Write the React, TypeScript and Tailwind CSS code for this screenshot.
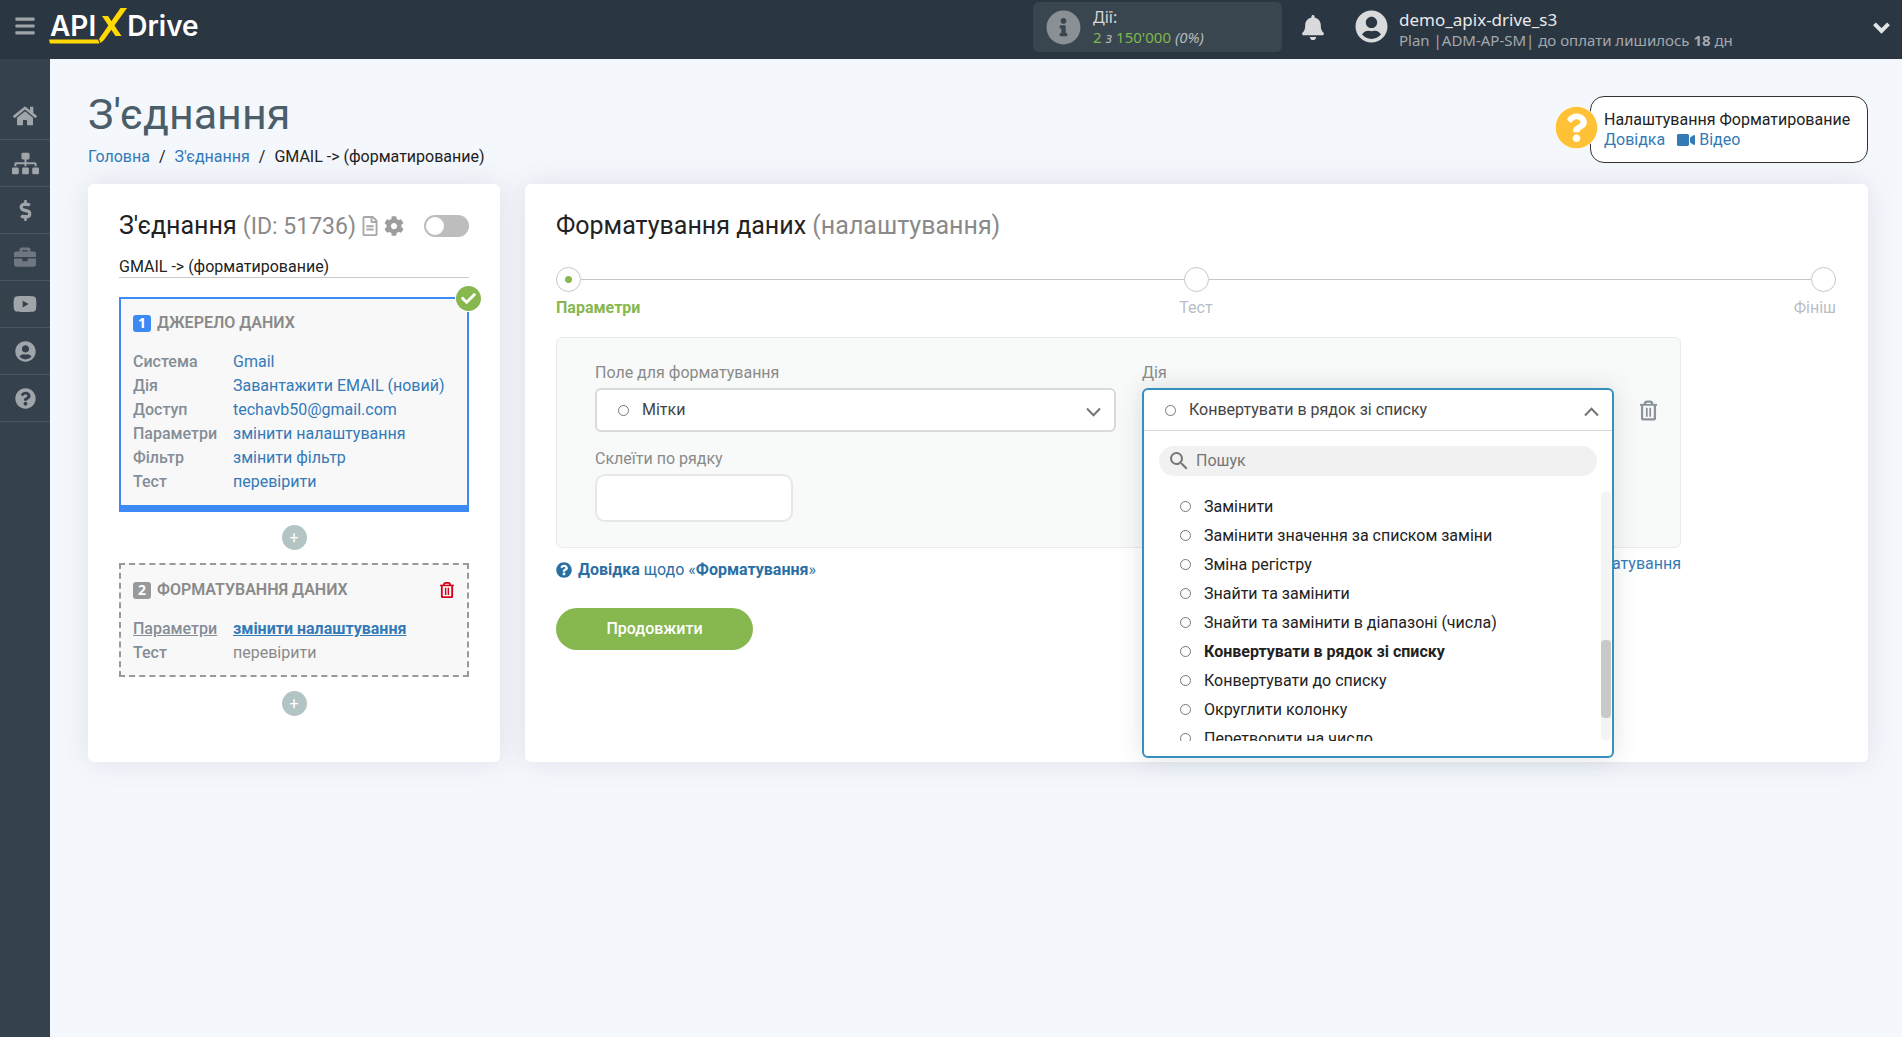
import type { ReactNode } from "react";
import {
  FaHome,
  FaSitemap,
  FaDollarSign,
  FaBriefcase,
  FaYoutube,
  FaUserCircle,
  FaQuestionCircle,
  FaInfoCircle,
  FaBell,
  FaVideo,
  FaCog,
  FaRegFileAlt,
  FaCheck,
  FaBars,
} from "react-icons/fa";
import { MdSearch } from "react-icons/md";

const roboto = "font-['Roboto',sans-serif]";
const notoSans = "font-['Noto_Sans',sans-serif]";

function Logo() {
  return (
    <a href="#" aria-label="APIXDrive" className="flex h-[38px] items-center font-['Inter',sans-serif] text-[28px] leading-[38px] font-semibold text-white">
      <span>API</span>
      <svg width="31" height="38" viewBox="0 0 31 38" className="overflow-visible" aria-hidden="true">
        <path d="M24.500 1H31L8 33L4.500 36L3 32Z" fill="#ffd900" />
        <path d="M6 9H12L25.500 29H19.500Z" fill="#ffd900" />
        <path d="M-47 32.500H2L3.500 36.500H-46Z" fill="#ffd900" />
      </svg>
      <span>Drive</span>
    </a>
  );
}

function ChevronIcon({ up = false }: { up?: boolean }) {
  return (
    <svg width="15" height="10" viewBox="0 0 15 10" fill="none" stroke="#757575" strokeWidth="2" aria-hidden="true">
      <path d={up ? "M1 8.500L7.500 1.800L14 8.500" : "M1 1.500L7.500 8.200L14 1.500"} />
    </svg>
  );
}

function TrashIcon({ className }: { className: string }) {
  return (
    <svg viewBox="0 0 18 21" fill="none" stroke="currentColor" strokeWidth="2.400" className={className} aria-hidden="true">
      <path d="M0 4.500H18" strokeWidth="2" />
      <path d="M5 4C5 2 6 1.200 7.500 1.200H10.500C12 1.200 13 2 13 4" />
      <path d="M2.200 5V19C2.200 19.500 2.500 19.800 3 19.800H15C15.500 19.800 15.800 19.500 15.800 19V5" />
      <path d="M7.200 7.500V17M10.800 7.500V17" strokeWidth="1.900" />
    </svg>
  );
}

const navItems = [
  { label: "Головна", icon: <FaHome className="size-6" /> },
  { label: "З'єднання", icon: <FaSitemap className="size-[27px]" /> },
  { label: "Оплата", icon: <FaDollarSign className="size-[21px]" /> },
  { label: "Проекти", icon: <FaBriefcase className="size-[22px] text-[#6f7780]" /> },
  { label: "Відео", icon: <FaYoutube className="size-6" /> },
  { label: "Профіль", icon: <FaUserCircle className="size-[21px]" /> },
  { label: "Довідка", icon: <FaQuestionCircle className="size-[21px]" /> },
];

function Header() {
  return (
    <header className={`flex h-[59px] shrink-0 items-start bg-[#2b3643] ${notoSans}`}>
      <button type="button" aria-label="Меню" className="mt-[15px] flex w-[50px] justify-center text-[#a0a5a9]">
        <FaBars className="size-[22px]" />
      </button>
      <div className="mt-[7px]">
        <Logo />
      </div>
      <div className="ml-auto flex w-[869px] items-start">
        <div className="mt-[2px] flex h-[50px] w-[249px] items-center gap-3 rounded-md bg-[#3a464f] pl-[13px]">
          <FaInfoCircle className="size-[35px] text-[#8a9093]" />
          <div className="text-base leading-5 text-[#d6d8da]">
            <div>Дії:</div>
            <div className="text-[15px] leading-5 text-[#b4b9bc]">
              <span className="text-[#7fb84c]">2</span> <em>з</em> <span className="text-[#7fb84c]">150'000</span> <em>(0%)</em>
            </div>
          </div>
        </div>
        <button type="button" aria-label="Сповіщення" className="mt-[15px] ml-5 text-[#d8dadb]">
          <FaBell className="h-[25px] w-[22px]" />
        </button>
        <FaUserCircle className="mt-[10px] ml-[31px] size-[33px] text-[#d8dadb]" />
        <div className="mt-[10px] ml-[11px] text-[#e8e9ea]">
          <div className="text-[17px] leading-5">demo_apix-drive_s3</div>
          <div className="text-[15px] leading-5 text-[#a3a8ac]">
            Plan |ADM-AP-SM| до оплати лишилось <b>18</b> дн
          </div>
        </div>
        <button type="button" aria-label="Розгорнути" className="mt-[22px] mr-3 ml-auto">
          <svg width="17" height="12" viewBox="0 0 17 12" fill="none" stroke="#e3e4e5" strokeWidth="4" aria-hidden="true">
            <path d="M1.500 1.800L8.500 8.800L15.500 1.800" />
          </svg>
        </button>
      </div>
    </header>
  );
}

function Sidebar() {
  return (
    <nav className="w-[50px] shrink-0 bg-[#36414e] pt-[34px]">
      {navItems.map((n) => (
        <a key={n.label} href="#" aria-label={n.label} className="flex h-[47px] items-center justify-center border-b border-[#4b5561] text-[#a0a5a9]">
          {n.icon}
        </a>
      ))}
    </nav>
  );
}

function StepHead({ n, title, color }: { n: number; title: string; color: string }) {
  return (
    <h3 className="flex items-center gap-[6px] text-base leading-[22px] font-semibold text-[#8a8a8a]">
      <span className={`flex h-[17px] w-[18px] items-center justify-center rounded-[3px] text-sm leading-4 font-bold text-white ${notoSans} ${color}`}>{n}</span>
      {title}
    </h3>
  );
}

function PlusButton() {
  return (
    <button type="button" aria-label="Додати блок" className="mx-auto flex size-[25px] items-center justify-center rounded-full bg-[#b3c4c4] text-base leading-4 text-white">
      +
    </button>
  );
}

const sourceRows = [
  ["Система", "Gmail"],
  ["Дія", "Завантажити EMAIL (новий)"],
  ["Доступ", "techavb50@gmail.com"],
  ["Параметри", "змінити налаштування"],
  ["Фільтр", "змінити фільтр"],
  ["Тест", "перевірити"],
];

function ConnectionCard() {
  return (
    <section className="w-[412px] shrink-0 rounded-md bg-white px-[31px] pt-[26px] pb-8 shadow-[0_0_30px_rgba(80,90,110,0.13)]">
      <div className="flex h-8 items-center">
        <h2 className="text-[25px] leading-8 text-[#222]">
          З'єднання <span className="text-[23px] text-[#8a8a8a]">(ID: 51736)</span>
        </h2>
        <button type="button" aria-label="Журнал" className="ml-[6px] text-[#a8a8a8]">
          <FaRegFileAlt className="h-5 w-4" />
        </button>
        <button type="button" aria-label="Налаштування" className="ml-[6px] text-[#9d9d9d]">
          <FaCog className="size-5" />
        </button>
        <label className="ml-auto flex h-[22px] w-[45px] cursor-pointer items-center rounded-full bg-[#bdbdbd] p-[2px]">
          <input type="checkbox" className="sr-only" aria-label="Увімкнути з'єднання" />
          <span className="size-[18px] rounded-full bg-white" />
        </label>
      </div>
      <input
        aria-label="Назва з'єднання"
        defaultValue="GMAIL -> (форматирование)"
        className="mt-[13px] block h-[23px] w-full border-b border-[#c8c8c8] bg-transparent text-base leading-5 text-[#222] outline-none"
      />
      <div className="relative mt-[19px] border-2 border-b-[7px] border-[#3e8af5] bg-[#f8f8f8] px-3 pt-[13px] pb-[11px]">
        <span className="absolute -top-[13px] -right-[14px] flex size-[25px] items-center justify-center rounded-full bg-[#86b84f] text-white ring-1 ring-white">
          <FaCheck className="size-[15px]" />
        </span>
        <StepHead n={1} title="ДЖЕРЕЛО ДАНИХ" color="bg-[#3e8af5]" />
        <dl className="mt-4 mr-[6px] grid grid-cols-[100px_minmax(0,1fr)] text-base leading-6">
          {sourceRows.map(([k, v]) => (
            <div key={k} className="contents">
              <dt className="font-medium text-[#858d96]">{k}</dt>
              <dd className="overflow-hidden whitespace-nowrap">
                <a href="#" className="text-[#337ab7]">{v}</a>
              </dd>
            </div>
          ))}
        </dl>
      </div>
      <div className="flex py-[13px]">
        <PlusButton />
      </div>
      <div className="border-2 border-dashed border-[#999] bg-[#f8f8f8] px-3 pt-[14px] pb-[10px]">
        <div className="flex items-center justify-between pr-[1px]">
          <StepHead n={2} title="ФОРМАТУВАННЯ ДАНИХ" color="bg-[#999]" />
          <button type="button" aria-label="Видалити" className="text-[#d0021b]">
            <TrashIcon className="h-4 w-[14px]" />
          </button>
        </div>
        <dl className="mt-4 grid grid-cols-[100px_minmax(0,1fr)] text-base leading-6">
          <dt className="font-medium text-[#858d96] underline">Параметри</dt>
          <dd><a href="#" className="font-bold text-[#337ab7] underline">змінити налаштування</a></dd>
          <dt className="font-medium text-[#858d96]">Тест</dt>
          <dd className="text-[#8a8a8a]">перевірити</dd>
        </dl>
      </div>
      <div className="flex py-[14px]">
        <PlusButton />
      </div>
    </section>
  );
}

function Stepper() {
  return (
    <div className="mt-[25px]">
      <div className="flex items-center">
        <span className="flex size-[25px] items-center justify-center rounded-full border border-[#c8c8c8]">
          <span className="size-[7px] rounded-full bg-[#86b84f]" />
        </span>
        <span className="h-px flex-1 bg-[#c4c8c6]" />
        <span className="size-[25px] rounded-full border border-[#c8c8c8]" />
        <span className="h-px flex-1 bg-[#c4c8c6]" />
        <span className="size-[25px] rounded-full border border-[#c8c8c8]" />
      </div>
      <ol className="mt-1 grid grid-cols-3 text-base leading-6 text-[#b9bec6]">
        <li className="font-bold text-[#86b84f]">Параметри</li>
        <li className="text-center">Тест</li>
        <li className="text-right">Фініш</li>
      </ol>
    </div>
  );
}

const options = [
  "Замінити",
  "Замінити значення за списком заміни",
  "Зміна регістру",
  "Знайти та замінити",
  "Знайти та замінити в діапазоні (числа)",
  "Конвертувати в рядок зі списку",
  "Конвертувати до списку",
  "Округлити колонку",
  "Перетворити на число",
];

function Ring() {
  return <span className="size-[11px] shrink-0 rounded-full border border-[#777]" />;
}

function SelectHead({ label, up, children }: { label: string; up?: boolean; children: ReactNode }) {
  return (
    <button type="button" aria-label={label} aria-expanded={up ? true : false} className="flex h-10 w-full items-center pr-[13px] pl-[21px] text-left text-base text-[#444]">
      <Ring />
      <span className="ml-[13px]">{children}</span>
      <span className="ml-auto pt-1">
        <ChevronIcon up={up} />
      </span>
    </button>
  );
}

function ActionDropdown() {
  const current = "Конвертувати в рядок зі списку";
  return (
    <div className="absolute inset-x-0 top-0 z-10 rounded-md border-2 border-[#3690bc] bg-white shadow-[0_0_24px_rgba(60,70,90,0.16)]">
      <SelectHead label="Дія" up>{current}</SelectHead>
      <div className="border-t border-[#d9d9d9] pt-[15px] pb-[15px]">
        <label className="mx-[15px] flex h-[30px] items-center rounded-full bg-[#f1f1f1] pl-2 text-[#767676]">
          <MdSearch className="size-6 shrink-0" />
          <input aria-label="Пошук" placeholder="Пошук" className="ml-[5px] w-full bg-transparent text-base outline-none placeholder:text-[#767676]" />
        </label>
        <div className="mt-[15px] flex h-[250px] pr-[1px]">
          <ul role="listbox" aria-label="Дія" className="flex-1 overflow-hidden pt-[1px] pl-9">
            {options.map((o) => (
              <li
                key={o}
                role="option"
                aria-selected={o === current}
                className={`flex h-[29px] items-center gap-[13px] text-base leading-[29px] text-[#222] ${o === current ? "font-bold" : ""}`}
              >
                <Ring />
                {o}
              </li>
            ))}
          </ul>
          <div className="w-[10px] rounded-full bg-[#f4f4f4] pt-[149px]">
            <div className="h-[78px] rounded bg-[#c9c9c9]" />
          </div>
        </div>
      </div>
    </div>
  );
}

function FormatCard() {
  return (
    <section className="min-w-0 flex-1 rounded-md bg-white pt-[26px] pr-8 pl-[31px] shadow-[0_0_30px_rgba(80,90,110,0.13)]">
      <h2 className="text-[25px] leading-8 text-[#222]">
        Форматування даних <span className="text-[#8a8a8a]">(налаштування)</span>
      </h2>
      <Stepper />
      <div className="mt-[17px] mr-[155px]">
        <div className="flex gap-[26px] rounded-md border border-[#e9ebea] bg-[#f8faf9] pt-6 pr-[23px] pb-[25px] pl-[38px] text-base leading-5 text-[#8a8a8a]">
          <div className="flex-[521]">
            <div className="leading-[22px]">Поле для форматування</div>
            <div className="mt-1 rounded-md border-2 border-[#d9dbda] bg-white">
              <SelectHead label="Поле для форматування">Мітки</SelectHead>
            </div>
            <label htmlFor="glue" className="mt-4 block leading-[22px]">Склеїти по рядку</label>
            <input id="glue" className="mt-1 block h-12 w-[198px] rounded-[10px] border-2 border-[#e6e8e7] bg-white px-4 text-[#222] outline-none" />
          </div>
          <div className="flex-[472]">
            <div className="leading-[22px]">Дія</div>
            <div className="relative mt-1">
              <ActionDropdown />
            </div>
          </div>
          <button type="button" aria-label="Видалити поле" className="mt-[38px] h-[21px] text-[#8a929c]">
            <TrashIcon className="h-[21px] w-[17px]" />
          </button>
        </div>
        <div className="flex justify-between pt-[5px] text-base">
          <a href="#" className="mt-[6px] flex items-center gap-[6px] leading-[22px] text-[#2a6fa3]">
            <FaQuestionCircle className="size-4" />
            <span><b>Довідка</b> щодо «<b>Форматування</b>»</span>
          </a>
          <a href="#" className="leading-[22px] text-[#337ab7]">Додати форматування</a>
        </div>
        <button type="button" className="mt-[27px] h-[42px] w-[197px] rounded-full bg-[#86b84f] text-base font-medium text-white">Продовжити</button>
      </div>
    </section>
  );
}

export default function App() {
  return (
    <div className={`flex min-h-screen flex-col bg-[#f4f7fc] text-[#222] ${roboto}`}>
      <Header />
      <div className="flex flex-1">
        <Sidebar />
        <main className="min-w-0 flex-1 pr-[34px] pl-[38px]">
          <div className="flex items-start justify-between pt-[30px]">
            <div>
              <h1 className="text-[43px] leading-[50px] text-[#4b5d69]">З'єднання</h1>
              <nav className="mt-[7px] flex gap-[9px] text-base leading-[22px]">
                <a href="#" className="text-[#337ab7]">Головна</a>
                <span>/</span>
                <a href="#" className="text-[#337ab7]">З'єднання</a>
                <span>/</span>
                <span>GMAIL -&gt; (форматирование)</span>
              </nav>
            </div>
            <aside className="relative mt-[7px] h-[67px] w-[278px] rounded-[14px] border border-[#333] bg-white pt-[13px] pl-[13px] text-base leading-5">
              <FaQuestionCircle className="absolute top-[9px] -left-[36px] size-[43px] rounded-full bg-white text-[#ffc136]" />
              <div className="whitespace-nowrap">Налаштування Форматирование</div>
              <div className="flex gap-3 text-[#337ab7]">
                <a href="#">Довідка</a>
                <a href="#" className="flex items-center gap-1">
                  <FaVideo className="size-[18px]" />
                  Відео
                </a>
              </div>
            </aside>
          </div>
          <div className="mt-4 flex gap-[25px]">
            <ConnectionCard />
            <FormatCard />
          </div>
        </main>
      </div>
    </div>
  );
}
